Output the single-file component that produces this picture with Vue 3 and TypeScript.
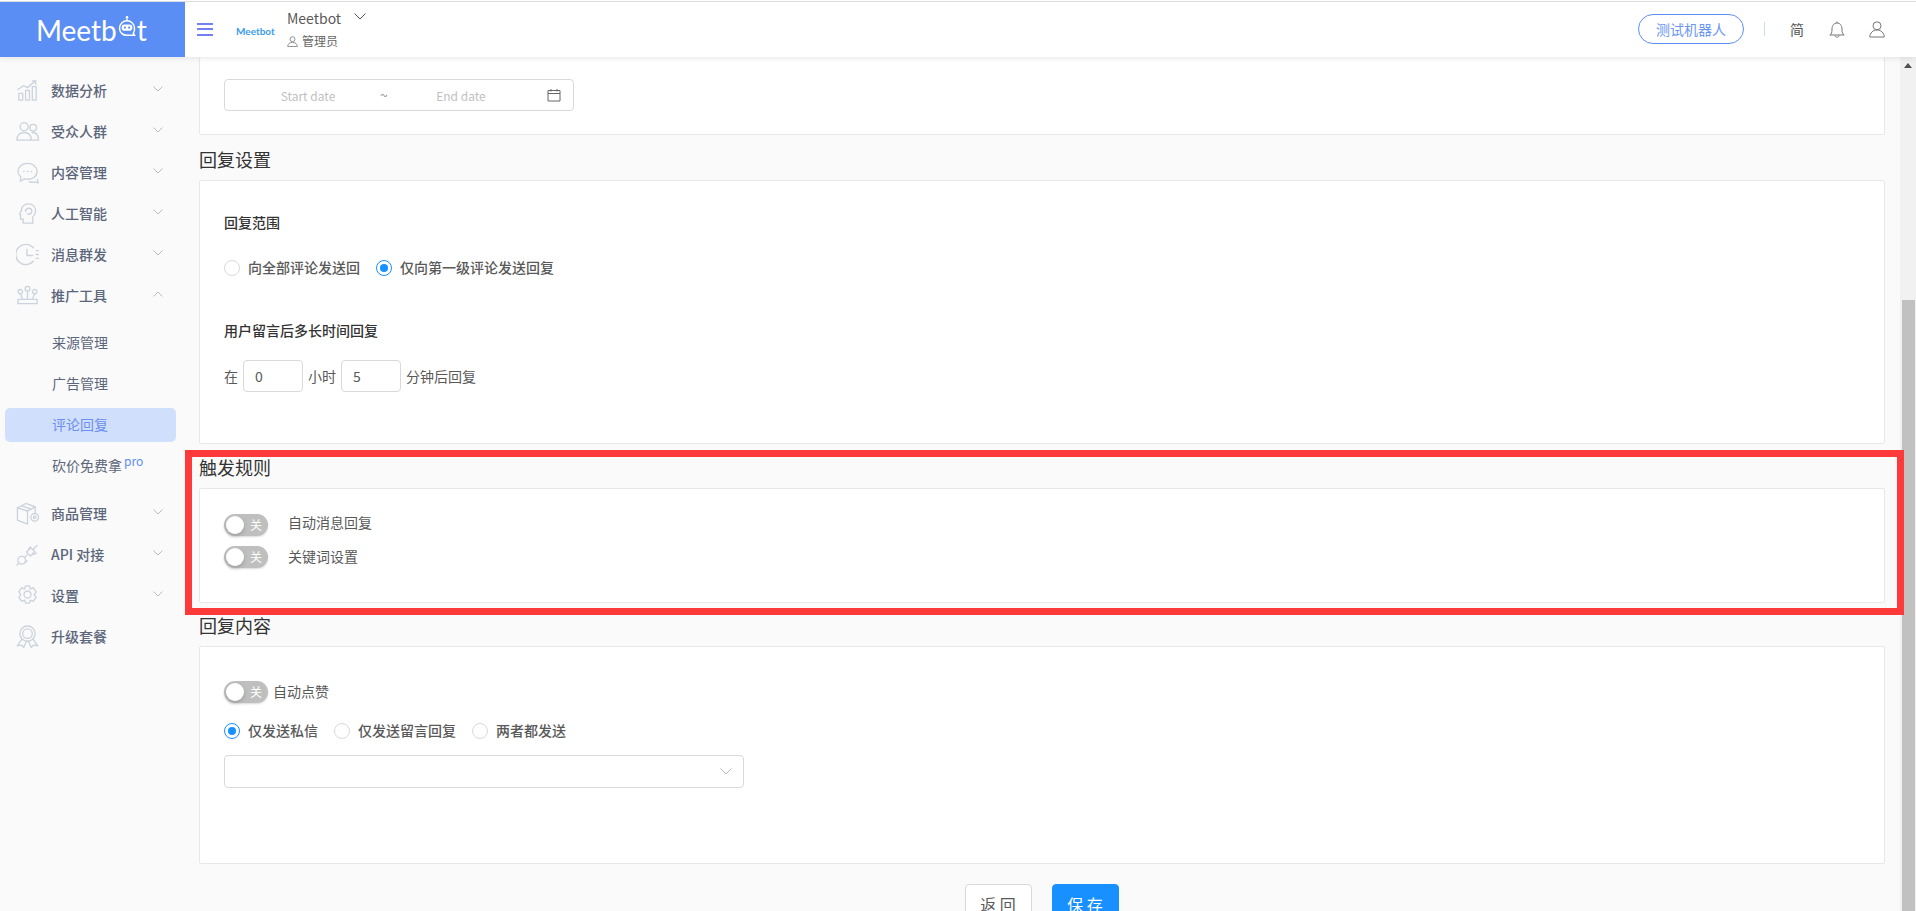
<script setup lang="ts">
interface NavItem { label: string; paths: string[]; chevron?: 'up' | 'down'; children?: { label: string; active?: boolean; pro?: boolean }[] }
const circle = (x: number, y: number, r: number) => `M${x - r} ${y}a${r} ${r} 0 1 0 ${r * 2} 0a${r} ${r} 0 1 0 ${-r * 2} 0`
const topNav: NavItem[] = [
  { label: '数据分析', chevron: 'down', paths: ['M3 22v-7h4v7zM10 22v-10h4v10zM17 22V8h4v14z', 'M2 11l6-4 4 2 8-7', 'M17 2h3.500v3.500'] },
  { label: '受众人群', chevron: 'down', paths: [circle(8.5, 7, 4.2), circle(18, 8, 3.5), 'M1 21c0-5 3-8 7.500-8s7.500 3 7.500 8z', 'M17 13c4 0 6.500 3 6.500 8H17'] },
  { label: '内容管理', chevron: 'down', paths: ['M12 2.500c5.500 0 10 3.500 10 8.500s-4.500 8-10 8c-1 0-2-.1-3-.4L4.500 21l.5-4.500C3.400 15 2 13 2 11c0-5 4.500-8.500 10-8.500z', 'M8 11h.4M12 11h.4M16 11h.4', 'M14 21.500c2 1 4.500 1 6.500.3l2.500 1-.5-3.500'] },
  { label: '人工智能', chevron: 'down', paths: ['M7.500 22v-4H5.500l-1-1 .5-3.500-1.500-1 2-3C5.500 5 8.500 2 13 2s7.500 3 7.500 7.500c0 3-1.500 4.500-3 6V22z', 'M10 10c0-2 1.500-3.500 3.500-3.500s3 1.500 3 3.200-1.500 2.800-3 2.800H12'] },
  { label: '消息群发', chevron: 'down', paths: ['M18 5A10.500 10.500 0 1 0 18 19', 'M11.500 6.500V13h6', 'M21 8h2.500M21 12h2.500M21 16h2.500'] },
  { label: '推广工具', chevron: 'up', paths: [circle(12, 5, 2.500), circle(4.500, 8, 2.300), circle(19.500, 8, 2.300), 'M12 8v7M5 11l1.500 4M19 11l-1.500 4', 'M2 16h20v4.500H2z'], children: [
    { label: '来源管理' }, { label: '广告管理' }, { label: '评论回复', active: true }, { label: '砍价免费拿', pro: true },
  ] },
]
const bottomNav: NavItem[] = [
  { label: '商品管理', chevron: 'down', paths: ['M1.500 6l9-4.500 9.500 3.500v7', 'M1.500 6v13l10.500 4V9.500L1.500 6zM12 9.500L20 5', 'M6 4l9.500 3.500', circle(19.5, 16, 4), circle(19.5, 16, 1.300)] },
  { label: 'API 对接', chevron: 'down', paths: [circle(6, 18, 4), 'M3 21l-2 2M9 15l2.500-2.500M9 21l2.500-2.500', 'M11 9.500l4 4 4.500-4.500-4-4z', 'M18 6.500l4-4M13 7l2-3M18 12l3-1.500'] },
  { label: '设置', chevron: 'down', paths: ['M10 2h4l1 3 3-1 3 4-2 3 2 3-3 4-3-1-1 3h-4l-1-3-3 1-3-4 2-3-2-3 3-4 3 1z', circle(12, 11, 3.700)] },
  { label: '升级套餐', paths: [circle(12, 9, 8), circle(12, 9, 5), 'M6 15l-4.500 6.500 4.500-.5 2 2.500 3-6.500M18 15l4.500 6.500-4.500-.5-2 2.500-3-6.500'] },
]
</script>

<template>
  <div class="page">
    <header class="header">
      <div class="brand">
        <span class="logo">Meetb<svg class="bot" viewBox="0 0 24 28"><circle cx="12" cy="2.500" r="1.600" fill="#fff"/><path d="M12 4v3" stroke="#fff" stroke-width="1.500"/><path d="M12 6.500a9 9 0 0 0-9 9c0 5 4 8.500 9 8.500h9l-1.500-2.500a9 9 0 0 0 1.500-6 9 9 0 0 0-9-9z" fill="none" stroke="#fff" stroke-width="1.800"/><rect x="5.500" y="11" width="13" height="7.500" rx="3.700" fill="#fff"/><circle cx="9.500" cy="14.700" r="1.300" fill="#5b8ef5"/><circle cx="14.500" cy="14.700" r="1.300" fill="#5b8ef5"/></svg>t</span>
      </div>
      <div class="hamburger"><i></i><i></i><i></i></div>
      <span class="mini-logo">Meetbot</span>
      <div class="account">
        <div class="account-name">Meetbot
          <svg class="account-chevron" viewBox="0 0 12 7"><path d="M.5.5 6 6l5.500-5.500" fill="none" stroke="#555" stroke-width="1"/></svg>
        </div>
        <div class="account-role">
          <svg class="role-icon" viewBox="0 0 12 12"><circle cx="6" cy="3.500" r="2.700" fill="none" stroke="#888"/><path d="M.8 11.500c0-3 2-4.500 5.200-4.500s5.200 1.500 5.200 4.500z" fill="none" stroke="#888"/></svg>
          管理员
        </div>
      </div>
      <div class="header-right">
        <button class="test-btn">测试机器人</button>
        <span class="divider"></span>
        <span class="lang">简</span>
        <svg class="hicon" viewBox="0 0 16 17"><path d="M.8 14c1.700-1 2.200-2.500 2.200-6 0-3.500 2-6 5-6s5 2.500 5 6c0 3.500.5 5 2.200 6z" fill="none" stroke="#777"/><path d="M6 14.500c0 2.300 4 2.300 4 0M8 .5V2" fill="none" stroke="#777"/></svg>
        <svg class="hicon" viewBox="0 0 16 17"><circle cx="8" cy="4.800" r="4" fill="none" stroke="#777"/><path d="M.8 16c0-4 3-7 7.200-7s7.200 3 7.200 7z" fill="none" stroke="#777"/></svg>
      </div>
    </header>

    <div class="body">
      <aside class="sidebar">
        <template v-for="item in topNav" :key="item.label">
          <div class="nav-row">
            <svg class="nav-icon" viewBox="0 0 24 24"><path v-for="d in item.paths" :key="d" :d="d"/></svg>
            <span class="nav-label">{{ item.label }}</span>
            <svg v-if="item.chevron" class="nav-chevron" :class="{ up: item.chevron === 'up' }" viewBox="0 0 10 6"><path d="M.5.500 5 5 9.500.500"/></svg>
          </div>
          <div v-if="item.children" class="sub-list">
            <div v-for="c in item.children" :key="c.label" class="sub-row" :class="{ active: c.active }">
              {{ c.label }}<sup v-if="c.pro" class="pro">pro</sup>
            </div>
          </div>
        </template>
        <div v-for="item in bottomNav" :key="item.label" class="nav-row">
          <svg class="nav-icon" viewBox="0 0 24 24"><path v-for="d in item.paths" :key="d" :d="d"/></svg>
          <span class="nav-label">{{ item.label }}</span>
          <svg v-if="item.chevron" class="nav-chevron" viewBox="0 0 10 6"><path d="M.5.500 5 5 9.500.500"/></svg>
        </div>
      </aside>

      <main class="main">
        <section class="card card-date">
          <div class="date-picker">
            <span class="date-ph start">Start date</span>
            <span class="tilde">~</span>
            <span class="date-ph end">End date</span>
            <svg class="cal" viewBox="0 0 14 14"><path d="M1 2.500h12v10.500H1zM1 5.500h12M4 1v2.500M10 1v2.500" fill="none" stroke="#666"/></svg>
          </div>
        </section>

        <h4 class="title">回复设置</h4>
        <section class="card card-reply">
          <div class="label-strong first">回复范围</div>
          <div class="radios scope">
            <label class="radio"><i class="dot"></i>向全部评论发送回</label>
            <label class="radio"><i class="dot on"></i>仅向第一级评论发送回复</label>
          </div>
          <div class="label-strong second">用户留言后多长时间回复</div>
          <div class="time-row">
            <span>在</span><span class="num">0</span><span>小时</span><span class="num">5</span><span>分钟后回复</span>
          </div>
        </section>

        <h4 class="title">触发规则</h4>
        <section class="card card-trigger">
          <div class="switch-row"><span class="switch"><i></i><b>关</b></span><span class="switch-text upper">自动消息回复</span></div>
          <div class="switch-row"><span class="switch"><i></i><b>关</b></span><span class="switch-text">关键词设置</span></div>
        </section>

        <h4 class="title tight">回复内容</h4>
        <section class="card card-content">
          <div class="switch-row like"><span class="switch"><i></i><b>关</b></span><span class="like-text">自动点赞</span></div>
          <div class="radios send">
            <label class="radio"><i class="dot on"></i>仅发送私信</label>
            <label class="radio"><i class="dot"></i>仅发送留言回复</label>
            <label class="radio"><i class="dot"></i>两者都发送</label>
          </div>
          <div class="select">
            <svg viewBox="0 0 12 7"><path d="M.5.500 6 6l5.500-5.500" fill="none" stroke="#bbb"/></svg>
          </div>
        </section>

        <div class="actions">
          <button class="btn">返 回</button>
          <button class="btn primary">保 存</button>
        </div>
      </main>

      <div class="scrollbar">
        <i class="arrow"></i>
        <div class="thumb"></div>
      </div>
    </div>
    <div class="highlight"></div>
  </div>
</template>

<style>
html, body { margin: 0; overflow: hidden; }
</style>

<style scoped>
.page { position: relative; width: 1916px; height: 911px; overflow: hidden; display: flex; flex-direction: column; background: #fafafa; font-family: "Noto Sans CJK SC", "Noto Sans", sans-serif; font-size: 14px; color: #595959; }
.header { position: relative; z-index: 2; height: 57px; box-sizing: border-box; display: flex; align-items: center; background: #fff; border-top: 1px solid transparent; box-shadow: 0 1px 6px rgba(0, 0, 0, .1); }
.header::before { content: ""; position: absolute; left: 0; right: 0; top: 0; height: 1px; background: #ddd; }
.brand { width: 185px; height: 55px; margin-top: 1px; align-self: flex-start; box-sizing: border-box; padding-left: 36px; display: flex; align-items: center; background: #5b8ef5; }
.logo { display: flex; align-items: center; font-family: Lato, sans-serif; font-weight: 400; font-size: 28px; line-height: 1; color: #fff; }
.bot { width: 20px; height: 24px; margin: -5px 0 0; }
.hamburger { margin-left: 12px; width: 16px; display: flex; flex-direction: column; gap: 3.500px; }
.hamburger i { height: 2px; background: #7580f0; }
.mini-logo { margin-left: 23px; margin-top: 3px; width: 51px; font-family: Lato, sans-serif; font-size: 10px; font-weight: 700; color: #3b9bec; }
.account { margin-left: 0; display: flex; flex-direction: column; gap: 6px; padding-top: 3px; }
.account-name { display: flex; align-items: center; font-size: 14px; line-height: 18px; color: #595959; height: 18px; margin-top: -3px; }
.account-chevron { width: 12px; height: 7px; margin-left: 13px; margin-top: -3px; }
.account-role { display: flex; align-items: center; font-size: 12px; line-height: 16px; color: #666; }
.role-icon { width: 11px; height: 11px; margin-right: 4px; }
.header-right { margin-left: auto; display: flex; align-items: center; padding-right: 31px; }
.test-btn { width: 106px; height: 30px; box-sizing: border-box; border: 1px solid #5b8ef5; border-radius: 15px; background: #fff; color: #6b96f5; font: inherit; padding: 0; }
.divider { width: 1px; height: 14px; margin: 0 25px 0 20px; background: #c9e0ee; }
.lang { font-size: 14px; color: #555; margin-right: 25px; }
.hicon { width: 16px; height: 17px; margin-right: 24px; }
.hicon:last-child { margin-right: 0; }
.body { flex: 1; display: flex; min-height: 0; }
.sidebar { width: 185px; flex: none; box-sizing: border-box; padding-top: 13px; background: #fafafa; }
.nav-row { height: 41px; display: flex; align-items: center; padding-left: 16px; position: relative; }
.nav-icon { width: 23px; height: 23px; flex: none; fill: none; stroke: #ccd3dd; stroke-width: 1.400; stroke-linecap: round; }
.nav-label { margin-left: 12px; margin-top: -2px; font-weight: 500; color: #5c667a; }
.nav-chevron { position: absolute; left: 153px; top: 16px; width: 10px; height: 6px; fill: none; stroke: #b4bcc8; }
.nav-chevron.up { transform: rotate(180deg); }
.sub-list { padding: 10px 0; display: flex; flex-direction: column; gap: 7px; }
.sub-row { height: 34px; box-sizing: border-box; margin: 0 9px 0 5px; padding: 0 0 2px 47px; display: flex; align-items: center; line-height: 32px; border-radius: 5px; color: #5c667a; }
.sub-row.active { background: #d0dffb; color: #6d8ff0; }
.pro { align-self: flex-start; margin-left: 2px; font-size: 12px; line-height: 24px; color: #5b8ef5; }
.main { flex: 1; min-width: 0; padding: 0 15px 0 14px; overflow: hidden; }
.card { box-sizing: border-box; background: #fff; border: 1px solid #e8e8e8; border-radius: 2px; padding-left: 24px; }
.card-date { height: 78px; border-top: 0; margin-bottom: 1px; padding-top: 22px; }
.date-picker { position: relative; width: 350px; height: 32px; box-sizing: border-box; border: 1px solid #d9d9d9; border-radius: 4px; display: flex; align-items: center; color: #bfbfbf; }
.date-ph { position: absolute; transform: translateX(-50%); font-size: 12px; }
.start { left: 83px; }
.end { left: 236px; }
.tilde { position: absolute; left: 155px; color: #999; }
.cal { position: absolute; right: 12px; width: 14px; height: 14px; }
.title { height: 44px; margin: 0; box-sizing: border-box; padding-top: 11px; font-size: 18px; line-height: 24px; font-weight: 400; color: #333; }
.title.tight { margin-top: -1px; }
.card-reply { height: 264px; padding-top: 31px; }
.label-strong { font-weight: 500; line-height: 20px; color: #333; }
.radios { display: flex; align-items: center; }
.scope { margin-top: 25px; gap: 16px; }
.radio { display: flex; align-items: center; gap: 8px; font-weight: 500; line-height: 20px; color: #595959; }
.dot { position: relative; top: 1px; width: 16px; height: 16px; box-sizing: border-box; border: 1px solid #d9d9d9; border-radius: 50%; background: #fff; }
.dot.on { border-color: #1890ff; }
.dot.on::after { content: ""; position: absolute; inset: 3px; border-radius: 50%; background: #1890ff; }
.second { margin-top: 43px; }
.time-row { margin-top: 20px; display: flex; align-items: center; gap: 5px; color: #595959; }
.num { width: 60px; height: 32px; box-sizing: border-box; border: 1px solid #d9d9d9; border-radius: 4px; padding-left: 11px; line-height: 30px; }
.card-trigger { height: 115px; padding-top: 25px; display: flex; flex-direction: column; gap: 10px; }
.switch-row { display: flex; align-items: center; height: 22px; }
.switch { position: relative; width: 44px; height: 22px; flex: none; border-radius: 11px; background: #bfbfbf; box-shadow: 0 1px 2px rgba(0, 0, 0, .15); }
.switch i { position: absolute; left: 2px; top: 2px; width: 18px; height: 18px; border-radius: 50%; background: #fff; box-shadow: 0 2px 4px rgba(0, 35, 11, .2); }
.switch b { position: absolute; right: 6px; top: 0; font-weight: 400; font-size: 12px; line-height: 22px; color: #fff; }
.switch-text { margin-left: 20px; margin-top: -2px; }
.switch-text.upper { margin-top: -6px; }
.like-text { margin-top: -2px; }
.card-content { height: 218px; padding-top: 34px; }
.like { gap: 5px; }
.send { margin-top: 17px; gap: 16px; }
.send .radio { gap: 8px; }
.select { margin-top: 15px; position: relative; width: 520px; height: 33px; box-sizing: border-box; border: 1px solid #d9d9d9; border-radius: 4px; }
.select svg { position: absolute; right: 11px; top: 12px; width: 12px; height: 7px; }
.actions { margin-top: 20px; display: flex; justify-content: center; gap: 20px; width: 1685px; }
.btn { width: 67px; height: 40px; box-sizing: border-box; padding: 0; border: 1px solid #d9d9d9; border-radius: 4px; background: #fff; color: #595959; font: inherit; font-size: 16px; flex: none; }
.btn.primary { border-color: #1890ff; background: #1890ff; color: #fff; }
.scrollbar { width: 16px; flex: none; position: relative; background: #f1f1f1; display: flex; flex-direction: column; align-items: center; }
.arrow { margin-top: 6px; width: 0; height: 0; border: 4px solid transparent; border-top: 0; border-bottom: 5px solid #505050; }
.thumb { margin-top: 232px; flex: 1; width: 13px; background: #c1c1c1; }
.highlight { position: absolute; left: 185px; top: 450px; width: 1719px; height: 165px; box-sizing: border-box; border: 7px solid #fd3a3a; z-index: 3; pointer-events: none; }
</style>
